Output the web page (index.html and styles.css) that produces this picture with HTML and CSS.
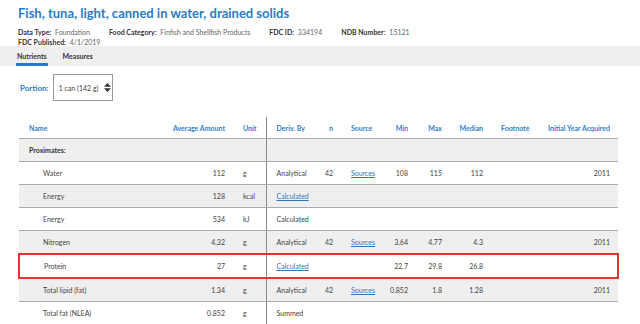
FILE: index.html
```html
<!DOCTYPE html>
<html lang="en">
<head>
    <meta charset="UTF-8">
    <title>Fish, tuna, light, canned in water, drained solids</title>
    <link rel="stylesheet" href="styles.css">
</head>
<body>
    <div class="page-head">
        <h1 class="food-title">Fish, tuna, light, canned in water, drained solids</h1>
        <div class="meta-row">
            <span class="meta-item"><b>Data Type:</b> Foundation</span>
            <span class="meta-item"><b>Food Category:</b> Finfish and Shellfish Products</span>
            <span class="meta-item"><b>FDC ID:</b> 334194</span>
            <span class="meta-item"><b>NDB Number:</b> 15121</span>
        </div>
        <div class="meta-row">
            <span class="meta-item"><b>FDC Published:</b> 4/1/2019</span>
        </div>
    </div>

    <ul class="tabs">
        <li class="tab active">Nutrients</li>
        <li class="tab">Measures</li>
    </ul>

    <div class="portion">
        <span class="portion-label">Portion:</span>
        <div class="portion-select">
            <span>1 can (142 g)</span>
            <svg class="spinner" width="7" height="9" viewBox="0 0 7 9">
                <path d="M3.5 0 L7 3.8 H0 Z M3.5 9 L7 5.2 H0 Z" fill="#333"/>
            </svg>
        </div>
    </div>

    <table class="nutrients">
        <colgroup>
            <col class="c-name">
            <col class="c-amount">
            <col class="c-unit">
            <col class="c-deriv">
            <col class="c-n">
            <col class="c-source">
            <col class="c-min">
            <col class="c-max">
            <col class="c-median">
            <col class="c-foot">
            <col class="c-year">
        </colgroup>
        <thead>
            <tr>
                <th>Name</th>
                <th class="num">Average Amount</th>
                <th>Unit</th>
                <th class="split">Deriv. By</th>
                <th class="num">n</th>
                <th>Source</th>
                <th class="num">Min</th>
                <th class="num">Max</th>
                <th class="num">Median</th>
                <th>Footnote</th>
                <th class="num">Initial Year Acquired</th>
            </tr>
        </thead>
        <tbody>
            <tr class="shade group">
                <td>Proximates:</td><td></td><td></td><td class="split"></td><td></td><td></td><td></td><td></td><td></td><td></td><td></td>
            </tr>
            <tr>
                <td class="sub">Water</td><td class="num">112</td><td>g</td><td class="split">Analytical</td><td class="num">42</td><td><a href="#">Sources</a></td><td class="num">108</td><td class="num">115</td><td class="num">112</td><td></td><td class="num">2011</td>
            </tr>
            <tr class="shade">
                <td class="sub">Energy</td><td class="num">128</td><td>kcal</td><td class="split"><a href="#">Calculated</a></td><td></td><td></td><td></td><td></td><td></td><td></td><td></td>
            </tr>
            <tr>
                <td class="sub">Energy</td><td class="num">534</td><td>kJ</td><td class="split">Calculated</td><td></td><td></td><td></td><td></td><td></td><td></td><td></td>
            </tr>
            <tr class="shade">
                <td class="sub">Nitrogen</td><td class="num">4.32</td><td>g</td><td class="split">Analytical</td><td class="num">42</td><td><a href="#">Sources</a></td><td class="num">3.64</td><td class="num">4.77</td><td class="num">4.3</td><td></td><td class="num">2011</td>
            </tr>
            <tr class="marked">
                <td class="sub">Protein</td><td class="num">27</td><td>g</td><td class="split"><a href="#">Calculated</a></td><td></td><td></td><td class="num">22.7</td><td class="num">29.8</td><td class="num">26.8</td><td></td><td></td>
            </tr>
            <tr class="shade">
                <td class="sub">Total lipid (fat)</td><td class="num">1.34</td><td>g</td><td class="split">Analytical</td><td class="num">42</td><td><a href="#">Sources</a></td><td class="num">0.852</td><td class="num">1.8</td><td class="num">1.28</td><td></td><td class="num">2011</td>
            </tr>
            <tr>
                <td class="sub">Total fat (NLEA)</td><td class="num">0.852</td><td>g</td><td class="split">Summed</td><td></td><td></td><td></td><td></td><td></td><td></td><td></td>
            </tr>
        </tbody>
    </table>
</body>
</html>
```

FILE: styles.css
```css
body {
    margin: 0;
    font-family: 'Lato', 'Open Sans', sans-serif;
    font-size: 7px;
    color: #444;
    background: #fff;
    overflow: hidden;
}

.page-head {
    padding: 4px 18px 0;
    height: 42px;
}

.food-title {
    margin: 0 0 5px;
    font-size: 13px;
    line-height: 18px;
    font-weight: bold;
    color: #2a7cc4;
}

.meta-row {
    display: flex;
    gap: 19px;
    line-height: 10px;
    color: #666;
}

.meta-item b {
    color: #333;
    margin-right: 2px;
}

/* Tabs bar */
.tabs {
    display: flex;
    gap: 14px;
    list-style: none;
    margin: 0;
    padding: 0 0 0 16px;
    height: 20px;
    background-color: #efefef;
}

.tab {
    font-weight: bold;
    color: #333;
    line-height: 21px;
    padding: 0 1px;
}

.tab.active {
    box-shadow: inset 0 -3px 0 #2a7cc4;
}

/* Portion selector */
.portion {
    display: flex;
    align-items: center;
    gap: 4px;
    padding: 8px 0 0 20px;
    height: 27px;
}

.portion-label {
    font-size: 8px;
    font-weight: bold;
    color: #2a7cc4;
}

.portion-select {
    display: flex;
    align-items: center;
    gap: 6px;
    width: 60px;
    height: 27px;
    padding-left: 5px;
    box-sizing: border-box;
    border: 1px solid #999;
    color: #444;
    white-space: nowrap;
}

/* Nutrient table */
.nutrients {
    margin: 16px 0 0 18px;
    width: 599px;
    table-layout: fixed;
    border-collapse: collapse;
}

.c-name { width: 132px; }
.c-amount { width: 82px; }
.c-unit { width: 33px; }
.c-deriv { width: 53px; }
.c-n { width: 22px; }
.c-source { width: 45px; }
.c-min { width: 30px; }
.c-max { width: 34px; }
.c-median { width: 41px; }
.c-foot { width: 47px; }
.c-year { width: 80px; }

.nutrients th,
.nutrients td {
    padding: 0 0 0 10px;
    text-align: left;
    white-space: nowrap;
    overflow: hidden;
}

.nutrients th {
    height: 21px;
    color: #2f80c8;
    font-weight: bold;
    border-bottom: 1px solid #aaa;
}

.nutrients td {
    height: 22px;
    border-bottom: 1px solid #aaa;
}

.nutrients .num {
    text-align: right;
    padding: 0 8px 0 0;
}

.nutrients .split {
    border-left: 1px solid #888;
}

.shade td {
    background-color: #efefef;
}

.group td {
    font-weight: bold;
    color: #333;
}

.nutrients td.sub {
    padding-left: 24px;
}

.nutrients a {
    color: #2b79c2;
}

/* Highlighted row */
.marked td {
    border-top: 2px solid #e8322f;
    border-bottom: 2px solid #e8322f;
}

.marked td:first-child {
    border-left: 2px solid #e8322f;
}

.marked td:last-child {
    border-right: 2px solid #e8322f;
}
```
